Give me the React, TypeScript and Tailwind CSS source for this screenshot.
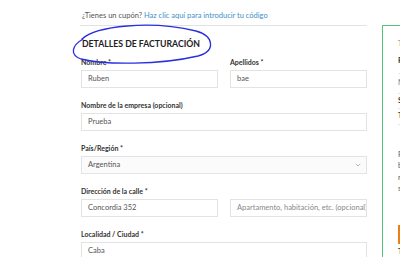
import React from "react";
import { ChevronDown } from "lucide-react";

const Label = ({ children }: { children: React.ReactNode }) => (
  <div className="text-[7px] leading-[10px] font-bold text-[#333] mb-[3px]">{children}</div>
);

const Input = ({ value, placeholder }: { value?: string; placeholder?: string }) => (
  <div className="h-[18px] min-w-0 border border-[#e3e3e3] bg-white px-[6px] flex items-center text-[7.5px] whitespace-nowrap overflow-hidden">
    {value ? <span className="text-[#555]">{value}</span> : <span className="text-[#888]">{placeholder}</span>}
  </div>
);

export default function App() {
  return (
    <div className="w-[400px] h-[257px] overflow-hidden bg-white font-['Lato','Liberation_Sans',sans-serif]">
      <div className="flex w-[700px] pl-[81px]">
        <div className="w-[286px] shrink-0">
          <p className="h-[25px] pt-[10px] text-[7.5px] leading-[12px] text-[#555] pl-[1px]">
            ¿Tienes un cupón? <span className="text-[#3d8fc9]">Haz clic aquí para introducir tu código</span>
          </p>
          <div className="border-t border-[#e2e2e2] -ml-[1px] pl-[1px]">
            <div className="relative pt-[12px] mb-[7px]">
              <h3 className="text-[8.7px] leading-[12px] font-bold text-[#222] pl-[1px]">
                DETALLES DE FACTURACIÓN
              </h3>
              <svg className="absolute pointer-events-none" style={{ left: -81, top: -25 }} width="260" height="80" viewBox="0 0 260 80">
                <path
                  d="M 82 38 C 96 25, 150 19, 196 30 C 214 35, 216 50, 198 55 C 160 64, 104 64, 81 58 C 70 54, 71 45, 83 38"
                  fill="none"
                  stroke="#2a2ee0"
                  strokeWidth="1.3"
                  strokeLinecap="round"
                />
              </svg>
            </div>
            <div className="grid grid-cols-2 gap-x-[12px] mb-[12px]">
              <div className="min-w-0">
                <Label>Nombre *</Label>
                <Input value="Ruben" />
              </div>
              <div className="min-w-0">
                <Label>Apellidos *</Label>
                <Input value="bae" />
              </div>
            </div>
            <div className="mb-[12px]">
              <Label>Nombre de la empresa (opcional)</Label>
              <Input value="Prueba" />
            </div>
            <div className="mb-[12px]">
              <Label>País/Región *</Label>
              <div className="h-[18px] border border-[#e3e3e3] bg-[#fbfbfb] pl-[6px] pr-[4px] flex items-center justify-between text-[7.5px] text-[#555]">
                <span>Argentina</span>
                <ChevronDown size={8} color="#999" strokeWidth={2} />
              </div>
            </div>
            <div className="mb-[12px]">
              <Label>Dirección de la calle *</Label>
              <div className="grid grid-cols-2 gap-x-[12px]">
                <Input value="Concordia 352" />
                <Input placeholder="Apartamento, habitación, etc. (opcional)" />
              </div>
            </div>
            <div>
              <Label>Localidad / Ciudad *</Label>
              <Input value="Caba" />
            </div>
          </div>
        </div>
        <div className="ml-[15px] mt-[25px] w-[250px] h-[260px] border border-[#52c57a] pl-[15px] pr-[15px] text-[7.5px] whitespace-nowrap">
          <div className="pt-[12px] h-[28px] leading-[12px] font-bold text-[#a89c80]">Tu pedido</div>
          <div className="h-[20px] leading-[12px] pt-[1px] font-bold text-[#333] border-b border-[#e5e5e5]">Producto</div>
          <div className="h-[20px] leading-[12px] pt-[3px] text-[#777] border-b border-[#e5e5e5]">Mate × 1</div>
          <div className="h-[15px] leading-[12px] pt-[1px] font-bold text-[#333] border-b border-[#e5e5e5]">Subtotal</div>
          <div className="h-[16px] leading-[12px] pt-[1px] font-bold text-[#333] border-b border-[#e5e5e5]">Total</div>
          <div className="pt-[24px] text-[#555] leading-[11.3px]">
            <div>Fácil y rápido con Mercado Pago</div>
            <div>botón de pago seguro</div>
            <div>recibe tu compra</div>
            <div>sin complicaciones</div>
          </div>
          <div className="mt-[31px] h-[19px] w-[120px] bg-[#ee7d13]" />
          <div className="mt-[3px] leading-[10px] text-[#333]">Tus datos personales</div>
        </div>
      </div>
    </div>
  );
}
